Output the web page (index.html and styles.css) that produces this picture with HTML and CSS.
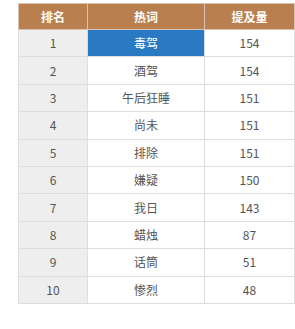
FILE: index.html
```html
<!DOCTYPE html>
<html lang="zh">
<head>
<meta charset="utf-8">
<link rel="stylesheet" href="styles.css">
</head>
<body>
<table class="rank">
  <colgroup><col class="c1"><col class="c2"><col class="c3"></colgroup>
  <thead>
    <tr><th>排名</th><th>热词</th><th>提及量</th></tr>
  </thead>
  <tbody>
    <tr><td class="idx">1</td><td class="sel">毒驾</td><td>154</td></tr>
    <tr><td class="idx">2</td><td>酒驾</td><td>154</td></tr>
    <tr><td class="idx">3</td><td>午后狂睡</td><td>151</td></tr>
    <tr><td class="idx">4</td><td>尚未</td><td>151</td></tr>
    <tr><td class="idx">5</td><td>排除</td><td>151</td></tr>
    <tr><td class="idx">6</td><td>嫌疑</td><td>150</td></tr>
    <tr><td class="idx">7</td><td>我日</td><td>143</td></tr>
    <tr><td class="idx">8</td><td>蜡烛</td><td>87</td></tr>
    <tr><td class="idx">9</td><td>话筒</td><td>51</td></tr>
    <tr><td class="idx">10</td><td>惨烈</td><td>48</td></tr>
  </tbody>
</table>
</body>
</html>
```
FILE: styles.css
```css
html, body {
  margin: 0;
  background: #ffffff;
}
body {
  padding: 3px 0 0 18px;
  font-family: "Noto Sans CJK SC", "Noto Sans", sans-serif;
  font-size: 12px;
  color: #555555;
}
.rank {
  border-collapse: collapse;
  width: 276px;
  table-layout: fixed;
}
.c1 { width: 69px; }
.c2 { width: 117px; }
.c3 { width: 90px; }
.rank th, .rank td {
  border: 1px solid #dddddd;
  text-align: center;
  padding: 0;
  line-height: 14px;
}
.rank th {
  background: #b97f4f;
  color: #ffffff;
  font-weight: bold;
  height: 25px;
  border-color: #d9c2ae;
}
.rank td {
  height: 26.4px;
}
.rank td.idx {
  background: #eeeeee;
}
.rank td.sel {
  background: #2a79c3;
  color: #ffffff;
}
```
